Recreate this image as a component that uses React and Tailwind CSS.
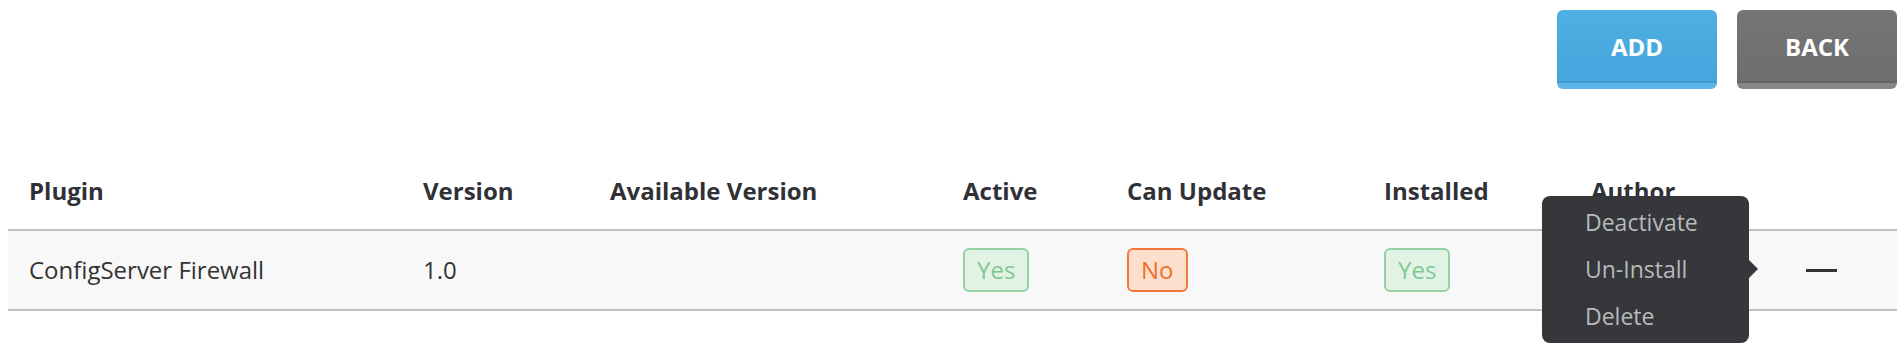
import React from 'react';

const cols = 'grid grid-cols-[394px_187px_353px_164px_257px_207px_215px_1fr]';

function Badge({ kind, children }) {
  const styles = kind === 'yes'
    ? 'bg-[#e2f3e6] border-[#93d3a3] text-[#7fca93]'
    : 'bg-[#fce0cd] border-[#f0783a] text-[#ef6f2c]';
  return (
    <span className={`inline-block rounded-md border-2 px-3 py-[6px] text-[24px] leading-[28px] ${styles}`}>
      {children}
    </span>
  );
}

function ActionMenu() {
  return (
    <div className="absolute left-[-243px] top-[-35px] z-10 w-[207px] h-[147px] rounded-lg bg-[#35373b] pl-[43px] pt-[3px]">
      {['Deactivate', 'Un-Install', 'Delete'].map(item => (
        <div key={item} className="h-[47px] leading-[47px] text-[23px] text-[#b8b9bb]">{item}</div>
      ))}
      <span className="absolute right-[-9px] top-[64px] h-0 w-0 border-y-[9px] border-l-[9px] border-y-transparent border-l-[#35373b]"></span>
    </div>
  );
}

export default function App() {
  const headers = ['Plugin', 'Version', 'Available Version', 'Active', 'Can Update', 'Installed', 'Author', ''];

  return (
    <div className="min-h-[354px] bg-white pl-2 pr-[7px] pt-[10px] text-[#333] font-['Open_Sans',sans-serif]">
      {/* Toolbar */}
      <div className="flex justify-end gap-5">
        <button className="h-[79px] w-[160px] rounded-md border-b-[6px] border-[#5ab6e8] bg-gradient-to-b from-[#4dafe4] to-[#46a5dc] text-[24px] font-bold text-white shadow-[inset_0_-2px_0_rgba(0,0,0,0.06)]">
          ADD
        </button>
        <button className="h-[79px] w-[160px] rounded-md border-b-[6px] border-[#868686] bg-gradient-to-b from-[#757575] to-[#6e6e6e] text-[24px] font-bold text-white shadow-[inset_0_-2px_0_rgba(0,0,0,0.08)]">
          BACK
        </button>
      </div>

      {/* Plugins table */}
      <div className="mt-[64px]">
        <div className={`${cols} h-[78px] items-center border-b-2 border-[#c0c0c0]`}>
          {headers.map((h, i) => (
            <div key={i} className="pl-[21px] text-[24px] font-bold text-[#2f3136]">{h}</div>
          ))}
        </div>
        <div className={`${cols} h-[80px] items-center border-b-2 border-[#c0c0c0] bg-[#f8f8f8] text-[24px]`}>
          <div className="pl-[21px]">ConfigServer Firewall</div>
          <div className="pl-[21px]">1.0</div>
          <div className="pl-[21px]"></div>
          <div className="pl-[21px]"><Badge kind="yes">Yes</Badge></div>
          <div className="pl-[21px]"><Badge kind="no">No</Badge></div>
          <div className="pl-[21px]"><Badge kind="yes">Yes</Badge></div>
          <div className="pl-[21px]"></div>
          <div className="relative flex h-full items-center pl-[21px]">
            <div className="h-[3px] w-[31px] bg-[#333]"></div>
            <ActionMenu />
          </div>
        </div>
      </div>
    </div>
  );
}
